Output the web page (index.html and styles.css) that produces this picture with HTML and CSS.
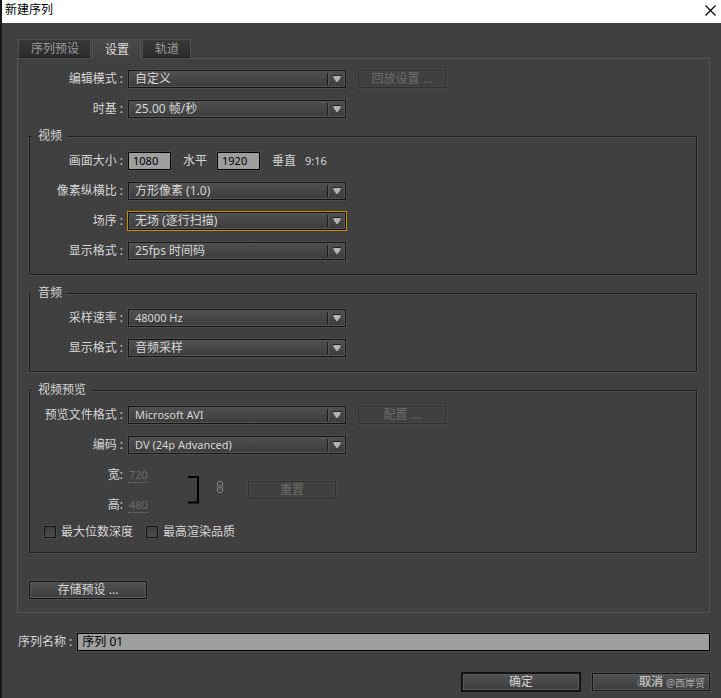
FILE: index.html
```html
<!DOCTYPE html>
<html lang="zh-CN">
<head>
<meta charset="utf-8">
<title>新建序列</title>
<meta name="viewport" content="width=device-width, initial-scale=1">
<link rel="stylesheet" href="styles.css">
</head>
<body>
<svg class="symbols" aria-hidden="true">
  <symbol id="arrow" viewBox="0 0 18 12">
    <path d="M.5 0v12" stroke="#1c1c1c"/>
    <path d="M1.500 0v12" stroke="#585858"/>
    <path d="M6 2.500h8" stroke="#222"/>
    <path d="M6.500 3h7v2l-3 4h-1l-3-4z" fill="#b4b4b4"/>
  </symbol>
</svg>
<main class="dialog">
  <header class="titlebar">
    <h1>新建序列</h1>
    <button class="close" type="button" aria-label="关闭">
      <svg width="11" height="11" viewBox="0 0 11 11"><path d="M.5.5l10 10M10.500.5l-10 10" stroke="#000" stroke-width="1.200"/></svg>
    </button>
  </header>
  <form class="content">
    <nav class="tabs">
      <button type="button" class="tab">序列预设</button>
      <button type="button" class="tab active">设置</button>
      <button type="button" class="tab">轨道</button>
    </nav>
    <section class="panel">
      <div class="row outer">
        <label for="mode">编辑模式 :</label>
        <span class="combo"><select id="mode"><option>自定义</option></select><svg><use href="#arrow"/></svg></span>
        <button type="button" class="btn small" disabled>回放设置 ...</button>
      </div>
      <div class="row outer">
        <label for="base">时基 :</label>
        <span class="combo"><select id="base"><option>25.00 帧/秒</option></select><svg><use href="#arrow"/></svg></span>
      </div>

      <fieldset>
        <legend>视频</legend>
        <div class="row size">
          <label for="w">画面大小 :</label>
          <input class="field latin" id="w" value="1080">
          <label class="unit" for="w">水平</label>
          <input class="field latin" id="h" value="1920">
          <label class="unit" for="h">垂直</label>
          <span class="latin">9:16</span>
        </div>
        <div class="row">
          <label for="par">像素纵横比 :</label>
          <span class="combo"><select id="par"><option>方形像素 (1.0)</option></select><svg><use href="#arrow"/></svg></span>
        </div>
        <div class="row">
          <label for="order">场序 :</label>
          <span class="combo current"><select id="order"><option>无场 (逐行扫描)</option></select><svg><use href="#arrow"/></svg></span>
        </div>
        <div class="row">
          <label for="vfmt">显示格式 :</label>
          <span class="combo"><select id="vfmt"><option>25fps 时间码</option></select><svg><use href="#arrow"/></svg></span>
        </div>
      </fieldset>

      <fieldset>
        <legend>音频</legend>
        <div class="row">
          <label for="rate">采样速率 :</label>
          <span class="combo"><select class="latin" id="rate"><option>48000 Hz</option></select><svg><use href="#arrow"/></svg></span>
        </div>
        <div class="row">
          <label for="afmt">显示格式 :</label>
          <span class="combo"><select id="afmt"><option>音频采样</option></select><svg><use href="#arrow"/></svg></span>
        </div>
      </fieldset>

      <fieldset class="preview">
        <legend>视频预览</legend>
        <div class="row">
          <label for="file">预览文件格式 :</label>
          <span class="combo"><select class="latin" id="file"><option>Microsoft AVI</option></select><svg><use href="#arrow"/></svg></span>
          <button type="button" class="btn small" disabled>配置 ...</button>
        </div>
        <div class="row">
          <label for="codec">编码 :</label>
          <span class="combo"><select class="latin" id="codec"><option>DV (24p Advanced)</option></select><svg><use href="#arrow"/></svg></span>
        </div>
        <div class="dims">
          <div class="pair">
            <div class="row"><label for="pw">宽:</label><input class="value latin" id="pw" value="720" disabled></div>
            <div class="row"><label for="ph">高:</label><input class="value latin" id="ph" value="480" disabled></div>
          </div>
          <svg class="bracket" width="11" height="28" viewBox="0 0 11 28"><path d="M0 1h10v25.500H0" fill="none" stroke="#000" stroke-width="2"/></svg>
          <svg class="chain" width="6" height="18" viewBox="0 0 6 18"><path d="M.5 5V1.500l1-1h3l1 1V5l-1 1M.5 7v3.500l1 1h3l1-1V7l-1-1M.5 5l1 1-1 1M3 3.500v5" fill="none" stroke="#888"/></svg>
          <button type="button" class="btn small" disabled>重置</button>
        </div>
        <div class="checks">
          <label><input type="checkbox">最大位数深度</label>
          <label><input type="checkbox">最高渲染品质</label>
        </div>
      </fieldset>

      <button type="button" class="btn save">存储预设 ...</button>
    </section>

    <div class="name">
      <label for="name">序列名称 :</label>
      <input class="field" id="name" value="序列 01">
    </div>
    <footer class="actions">
      <button type="submit" class="btn primary">确定</button>
      <button type="button" class="btn">取消</button>
      <span class="watermark"><span class="site">CSDN</span> @西岸贤</span>
    </footer>
  </form>
</main>
</body>
</html>
```
FILE: styles.css
```css
* { box-sizing: border-box; }

body {
  margin: 0;
  min-height: 100vh;
  background: #404040;
  color: #d6d6d6;
  font: 12px/16px "Noto Sans", "Noto Sans CJK SC", sans-serif;
}

button, input, select { font: inherit; color: inherit; margin: 0; }

.symbols { display: none; }

.dialog {
  min-height: 100vh;
  border-left: 2px solid #181818;
}

.titlebar {
  display: flex;
  align-items: flex-start;
  justify-content: space-between;
  height: 23px;
  padding: 2px 5px 0 3px;
  background: #fff;
  color: #000;
}

.titlebar h1 { margin: 0; font-size: 12px; font-weight: 400; }

.close {
  display: flex;
  padding: 3px 0 0;
  border: 0;
  background: none;
}

.content { padding: 16px 11px 6px 15px; }

.tabs {
  display: flex;
  gap: 1px;
  padding-left: 1px;
}

.tab {
  height: 19px;
  padding: 0 11px 0 12px;
  border: 1px solid #505050;
  border-bottom-color: #1c1c1c;
  background: linear-gradient(#383838, #2c2c2c);
  color: #9a9a9a;
  line-height: 16px;
}

.tab.active {
  height: 20px;
  margin-bottom: -1px;
  border-bottom: 0;
  background: linear-gradient(#4a4a4a, #404040);
  color: #dcdcdc;
  z-index: 1;
}

.panel {
  padding: 11px 12px 13px 11px;
  border: 1px solid #545454;
}

.row { display: flex; align-items: center; gap: 5px; height: 18px; }
.row + .row { margin-top: 12px; }
.row.outer { padding-left: 1px; }
.row > label:first-child { width: 93px; text-align: right; white-space: nowrap; }

fieldset {
  min-width: 0;
  margin: 10px 0 0;
  padding: 8px 0 14px;
  border: 1px solid #1e1e1e;
  box-shadow: 0 1px #4e4e4e, 1px 0 #4e4e4e, -1px 0 #4e4e4e, inset 0 1px #4e4e4e;
}

legend {
  margin-left: 2px;
  padding: 0 5px 0 6px;
  background: #404040;
}

.latin { font-size: 11px; }

.combo { display: grid; width: 218px; }
.combo > * { grid-area: 1 / 1; }

.combo select {
  appearance: none;
  height: 18px;
  padding: 0 20px 0 6px;
  border: 1px solid #141414;
  border-radius: 0;
  background: linear-gradient(#505050, #3c3c3c);
  box-shadow: 0 0 0 1px #4c4c4c, inset 0 0 0 1px #555;
  line-height: 16px;
  outline: 0;
}

.combo .latin, .size .field, .value { padding-bottom: 2px; }

.combo.current select { box-shadow: 0 0 0 1px #c8900a, inset 0 0 0 1px #555; }

.combo svg {
  width: 18px;
  height: 12px;
  place-self: center end;
  margin-right: 1px;
  pointer-events: none;
}

.btn {
  width: 118px;
  height: 18px;
  padding: 0;
  border: 1px solid #141414;
  background: linear-gradient(#525252, #3c3c3c);
  box-shadow: 0 0 0 1px #4c4c4c, inset 0 0 0 1px #5a5a5a;
  line-height: 14px;
}

.btn.small { width: 88px; }
.combo + .btn { margin-left: 7px; }

.btn:disabled {
  border-color: #303030;
  background: #404040;
  box-shadow: 0 0 0 1px #464646, inset 0 0 0 1px #464646;
  color: #6c6c6c;
}

.field {
  height: 18px;
  padding: 0 4px;
  border: 1px solid #000;
  border-radius: 0;
  background: #9e9e9e;
  box-shadow: 0 0 0 1px #4c4c4c;
  color: #000;
}

.size .field { width: 43px; }
.size .unit { margin: 0 5px 0 7px; }
.size .unit:nth-child(5) { margin-right: 4px; }

.dims { display: flex; align-items: center; margin-top: 12px; }

.value {
  width: 20px;
  height: 16px;
  padding: 0 0 0 1px;
  border: 0;
  border-bottom: 1px dotted #777;
  background: none;
  color: #6c6c6c;
}

.bracket { margin-left: 40px; }
.chain { margin: 0 25px 0 18px; }

.checks { display: flex; gap: 13px; height: 18px; margin-top: 9px; padding-left: 14px; }
.checks label { display: flex; align-items: center; gap: 5px; }

.checks input {
  appearance: none;
  width: 12px;
  height: 12px;
  border: 1px solid #141414;
  background: linear-gradient(#3e3e3e, #4c4c4c);
  box-shadow: 0 0 0 1px #4c4c4c;
}

.preview { padding-bottom: 11px; }

.save { display: block; margin-top: 28px; }

.name { display: flex; align-items: center; gap: 5px; margin-top: 20px; padding-left: 1px; }
.name .field { flex: 1; min-width: 0; padding-bottom: 2px; }

.actions {
  position: relative;
  display: flex;
  align-items: center;
  justify-content: flex-end;
  gap: 11px;
  margin-top: 21px;
}

.btn.primary {
  width: 120px;
  height: 20px;
  border-width: 2px;
  box-shadow: inset 0 0 0 1px #5a5a5a;
}

.watermark {
  position: absolute;
  right: 5px;
  top: 3px;
  color: #a8a8a8;
  font-size: 10px;
  pointer-events: none;
}

.watermark .site { opacity: .6; }
```
